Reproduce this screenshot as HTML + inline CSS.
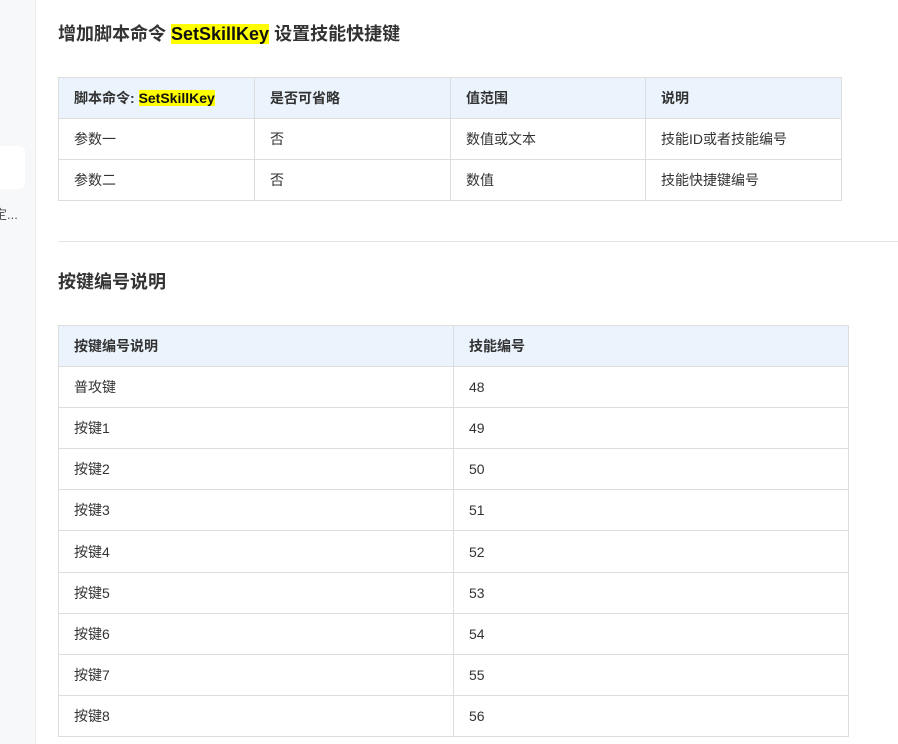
<!DOCTYPE html>
<html><head><meta charset="utf-8"><style>
body{margin:0;width:898px;height:744px;overflow:hidden;background:#fff;font-family:"Liberation Sans","Noto Sans CJK SC",sans-serif;color:#333;position:relative}
.side{position:absolute;left:0;top:0;width:35px;height:744px;background:#f7f8fa;border-right:1px solid #eee}
.box{position:absolute;left:-10px;top:146px;width:35px;height:43px;background:#fff;border-radius:6px}
.st{position:absolute;left:-6px;top:204px;font-size:13px;color:#555}
h2{position:absolute;left:58px;margin:0;font-size:18px;font-weight:bold;color:#333}
.hl{background:#ff0;color:#111}
table{position:absolute;left:58px;border-collapse:collapse;font-size:14px}
td,th{border:1px solid #ddd;height:40px;padding:0 0 0 15px;text-align:left;box-sizing:border-box}
th{background:#ebf3fd;font-weight:bold;color:#333}
hr{position:absolute;left:58px;top:241px;width:840px;margin:0;border:0;border-top:1px solid #e5e5e5}
</style></head><body>
<div class="side"><div class="box"></div><div class="st">定...</div></div>
<h2 style="top:20px">增加脚本命令 <span class="hl">SetSkillKey</span> 设置技能快捷键</h2>
<table style="top:77px;width:784px">
<tr><th style="width:196px;height:41px">脚本命令: <span class="hl">SetSkillKey</span></th><th style="width:196px">是否可省略</th><th style="width:195px">值范围</th><th>说明</th></tr>
<tr><td style="height:41px">参数一</td><td>否</td><td>数值或文本</td><td>技能ID或者技能编号</td></tr>
<tr><td style="height:41px">参数二</td><td>否</td><td>数值</td><td>技能快捷键编号</td></tr>
</table>
<hr>
<h2 style="top:268px">按键编号说明</h2>
<table style="top:325px;width:791px">
<tr><th style="width:395px;height:41px">按键编号说明</th><th>技能编号</th></tr>
<tr><td style="height:41px">普攻键</td><td>48</td></tr>
<tr><td style="height:41px">按键1</td><td>49</td></tr>
<tr><td style="height:41px">按键2</td><td>50</td></tr>
<tr><td style="height:41px">按键3</td><td>51</td></tr>
<tr><td style="height:42px">按键4</td><td>52</td></tr>
<tr><td style="height:41px">按键5</td><td>53</td></tr>
<tr><td style="height:41px">按键6</td><td>54</td></tr>
<tr><td style="height:41px">按键7</td><td>55</td></tr>
<tr><td style="height:41px">按键8</td><td>56</td></tr>
</table>
</body></html>
